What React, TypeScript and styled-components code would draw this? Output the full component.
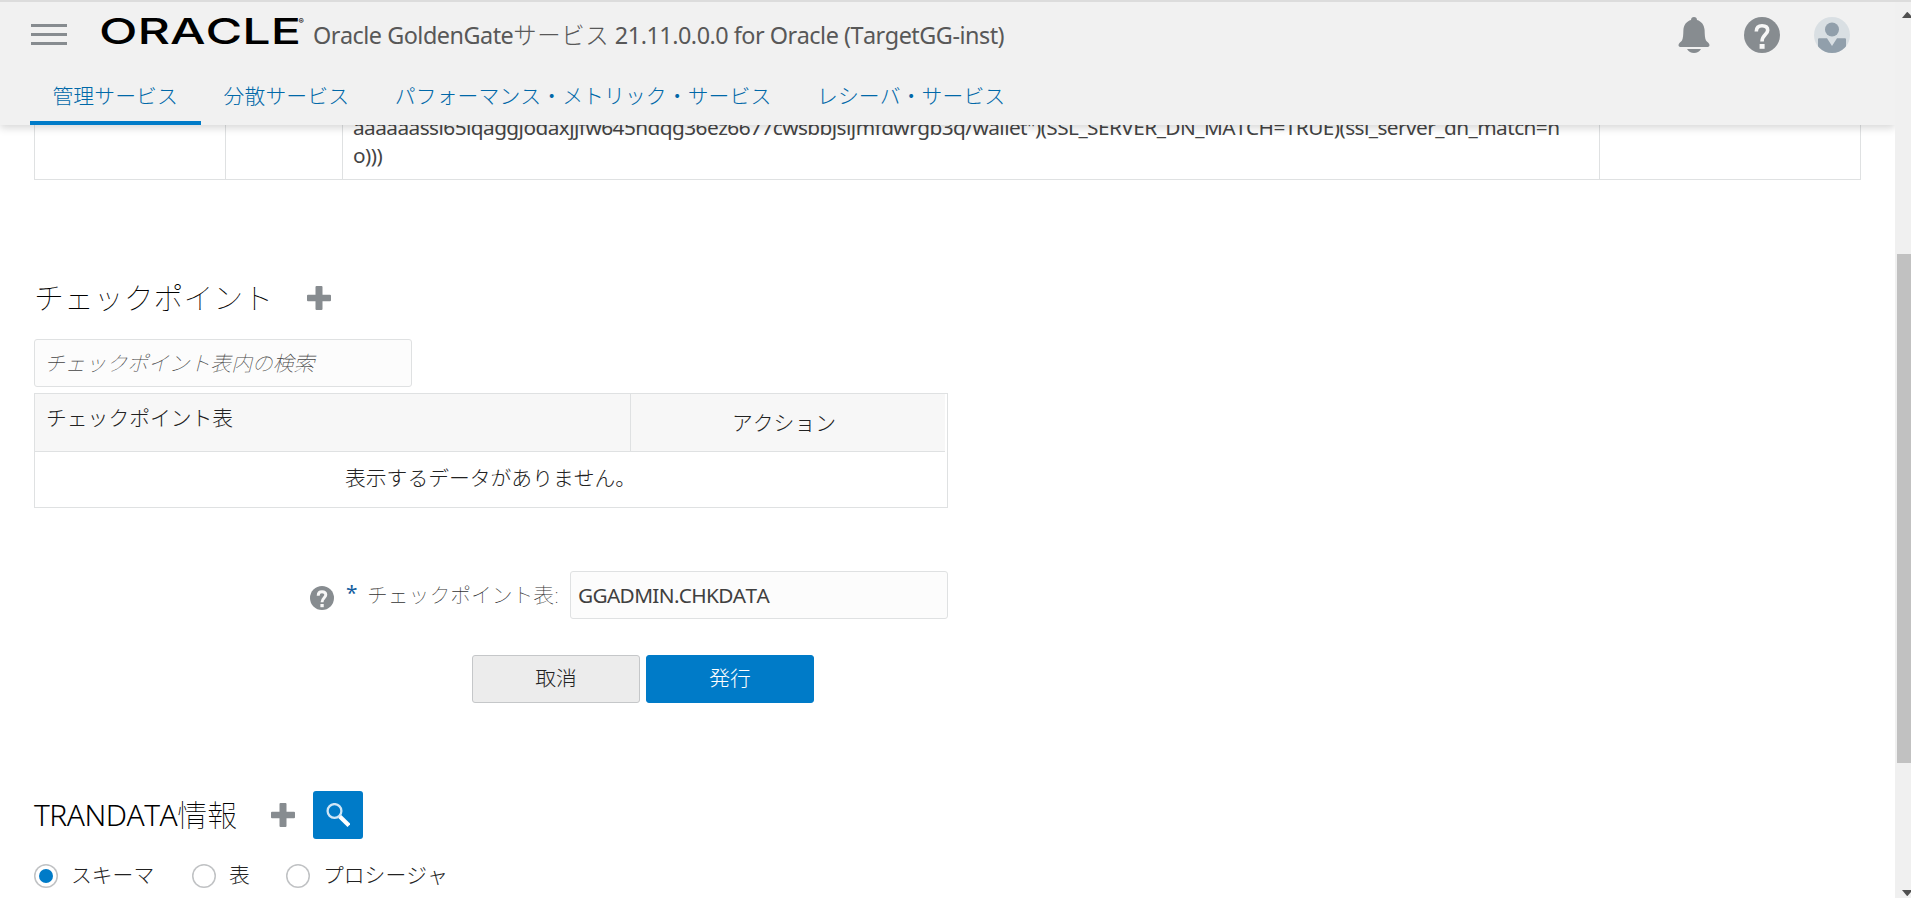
import React from 'react';
import styled, { createGlobalStyle } from 'styled-components';

const fontStack = `"Noto Sans", "Noto Sans CJK JP", sans-serif`;
const accent = '#007bc8';
const line = '#dfe1e2';
const iconGray = '#878c90';

const GlobalStyle = createGlobalStyle`
  *, *::before, *::after { box-sizing: border-box; }
  body {
    margin: 0;
    background: #fff;
    color: #222;
    font-family: ${fontStack};
    font-size: 20.8px;
    font-weight: 300;
    font-kerning: none;
    overflow: hidden;
  }
  input, button { font: inherit; color: inherit; }
`;

const Screen = styled.div`
  display: flex;
  height: 898px;
  border-top: 2px solid #dcdcdc;
`;

const Page = styled.div`
  flex: 1;
  min-width: 0;
  display: flex;
  flex-direction: column;
  overflow: hidden;
`;

const Header = styled.header`
  flex: none;
  position: relative;
  z-index: 1;
  height: 123px;
  display: flex;
  flex-direction: column;
  justify-content: space-between;
  background: #f1f1f1;
  box-shadow: 0 3px 8px rgba(0, 0, 0, 0.16);
`;

const Branding = styled.div`
  display: flex;
  align-items: flex-start;
  padding: 15px 45px 0 31px;
`;

const MenuButton = styled.button`
  width: 36px;
  height: 21px;
  margin: 7px 29px 0 0;
  padding: 0;
  border: 0;
  background: none;
  display: flex;
  flex-direction: column;
  justify-content: space-between;
`;

const MenuBar = styled.span`
  height: 3px;
  background: ${iconGray};
`;

const Logo = styled.svg`
  flex: none;
  width: 216px;
  height: 48px;
  margin: -9px 0 -7px;
`;

const Title = styled.h1`
  flex: 1;
  margin: 2px 0 0 1px;
  font-size: 23.4px;
  line-height: 32px;
  font-weight: 400;
  letter-spacing: -0.49px;
  color: #585858;
  white-space: nowrap;
`;

const TitleKana = styled.span`
  font-weight: 300;
  letter-spacing: 0.6px;
`;

const Tools = styled.div`
  display: flex;
  align-items: center;
  height: 36px;

  svg + svg { margin-left: 34px; }
`;

const Tabs = styled.nav`
  display: flex;
  padding-left: 30px;
`;

const Tab = styled.a<{ $active?: boolean }>`
  height: 56px;
  padding: 8px 23.3px 0 22.4px;
  line-height: 38px;
  letter-spacing: 0.12px;
  color: #0068a8;
  white-space: nowrap;
  border-bottom: 4px solid ${p => (p.$active ? accent : 'transparent')};
`;

const Content = styled.main`
  padding: 0 34px;
`;

const CredentialsRow = styled.div`
  display: grid;
  grid-template-columns: 191px 117px 1257px 1fr;
  width: 1827px;
  height: 55px;
  border: solid ${line};
  border-width: 0 1px 1px 0;
`;

const CredentialsCell = styled.div`
  border-left: 1px solid ${line};
  padding-left: 10px;
  line-height: 28px;
  white-space: nowrap;
  font-weight: 400;
  letter-spacing: -0.555px;
  color: #444;
`;

const ConnectString = styled.div`
  margin-top: -12px;
`;

const SectionHead = styled.div<{ $top: number; $bottom: number; $gap: number }>`
  display: flex;
  align-items: center;
  height: 48px;
  margin: ${p => p.$top}px 0 ${p => p.$bottom}px;
  gap: ${p => p.$gap}px;
`;

const Heading = styled.h2`
  margin: 0;
  font-size: 29.9px;
  line-height: 44px;
  font-weight: 100;
  color: #000;
  white-space: nowrap;
`;

const HeadingLatin = styled.span`
  font-weight: 300;
  letter-spacing: -0.5px;
`;

const SearchButton = styled.button`
  width: 50px;
  height: 48px;
  margin-left: -16px;
  padding: 0;
  border: 0;
  border-radius: 3px;
  background: ${accent};
  display: grid;
  place-items: center;
`;

const Field = styled.input<{ $inset: number }>`
  display: block;
  width: 378px;
  height: 48px;
  padding: 0 ${p => p.$inset}px;
  border: 1px solid ${line};
  border-radius: 3px;
  background: #fcfcfc;
  color: #404040;
  font-weight: 400;
  letter-spacing: -0.65px;
  outline: none;

  &::placeholder {
    color: #444;
    opacity: 1;
    font-style: italic;
    font-weight: 100;
    letter-spacing: 0;
  }
`;

const Table = styled.div`
  width: 914px;
  height: 115px;
  margin-top: 6px;
  border: 1px solid ${line};
`;

const TableHead = styled.div`
  display: grid;
  grid-template-columns: 596px 1fr;
  width: 910px;
  height: 58px;
  background: #f7f7f7;
  border-bottom: 1px solid ${line};
`;

const HeadCell = styled.div<{ $center?: boolean }>`
  padding: ${p => (p.$center ? '0 8px 2px 0' : '0 0 12px 11px')};
  display: flex;
  align-items: center;
  justify-content: ${p => (p.$center ? 'center' : 'flex-start')};
  border-right: ${p => (p.$center ? '0' : `1px solid ${line}`)};
`;

const EmptyRow = styled.div`
  height: 54px;
  line-height: 52px;
  padding-left: 310px;
`;

const FormRow = styled.div`
  width: 914px;
  margin-top: 63px;
  display: flex;
  align-items: center;
  justify-content: flex-end;

  > svg { margin-top: 6px; }
`;

const Required = styled.span`
  margin: -6px 10px 0 12px;
  width: 11px;
  color: #145c9e;
  font-weight: 400;
`;

const Label = styled.label`
  width: 203px;
  color: #333;
  font-weight: 100;
  line-height: 48px;
  white-space: nowrap;
`;

const Actions = styled.div`
  display: flex;
  gap: 6px;
  margin: 36px 0 0 438px;
`;

const Button = styled.button<{ $primary?: boolean }>`
  width: 168px;
  height: 48px;
  padding: 0 0 4px;
  border: 1px solid ${p => (p.$primary ? accent : '#c5c7c9')};
  border-radius: 3px;
  background: ${p => (p.$primary ? accent : '#ececec')};
  color: ${p => (p.$primary ? '#fff' : '#222')};
`;

const Radios = styled.div`
  display: flex;
`;

const Radio = styled.label<{ $width?: number }>`
  display: flex;
  align-items: center;
  gap: 13px;
  width: ${p => (p.$width ? `${p.$width}px` : 'auto')};
  height: 30px;
  white-space: nowrap;
`;

const RadioDot = styled.span<{ $checked?: boolean }>`
  flex: none;
  width: 24px;
  height: 24px;
  margin-top: 4px;
  border-radius: 50%;
  display: grid;
  place-items: center;
  background: #fff;
  box-shadow: inset 0 0 0 1.5px #c0c2c4;

  &::after {
    content: '';
    width: 14px;
    height: 14px;
    border-radius: 50%;
    background: ${p => (p.$checked ? accent : 'transparent')};
  }
`;

const Scrollbar = styled.div`
  flex: none;
  width: 16px;
  background: #f0f0f0;
  display: flex;
  flex-direction: column;
  align-items: flex-end;
  padding: 10px 0 2px;
`;

const Thumb = styled.div`
  width: 14px;
  height: 509px;
  margin: 236px 0 auto;
  background: #c1c1c1;
`;

const ScrollArrow = ({ down }: { down?: boolean }) => (
  <svg width="9" height="6" viewBox="0 0 9 6" fill="#505050">
    <path d={down ? 'M0 0H9V2L5.5 6H5Z' : 'M0 6H9V3.5L5.5 0H5Z'} />
  </svg>
);

const BellIcon = () => (
  <svg width="32" height="36" viewBox="0 0 32 36" fill={iconGray}>
    <path d="M16 0C14.2 0 13 1.2 13 3C8.500 4.300 5.700 8 5.400 13C5.200 18 5.200 21 4 23.500C3.200 25 .5 26 .5 28C.5 29.500 1.500 30 3 30H29C30.500 30 31.500 29.500 31.500 28C31.500 26 28.800 25 28 23.500C26.800 21 26.800 18 26.600 13C26.300 8 23.500 4.300 19 3C19 1.200 17.800 0 16 0Z" />
    <path d="M9 32H23C21.500 34.800 19 36 16 36S10.500 34.800 9 32Z" />
  </svg>
);

const HelpIcon = ({ size }: { size: number }) => (
  <svg width={size} height={size} viewBox="0 0 36 36">
    <circle cx="18" cy="18" r="18" fill={iconGray} />
    <path
      d="M12.300 14.500C12.300 10.500 14.500 8.700 18 8.700C21.700 8.700 23.700 10.500 23.700 13.300C23.700 17.500 18 18 18 24.500"
      fill="none"
      stroke="#f7f7f7"
      strokeWidth={size > 30 ? 3.6 : 4.4}
    />
    <rect x="15.600" y="27" width="5" height="4.800" fill="#f7f7f7" />
  </svg>
);

const AvatarIcon = () => (
  <svg width="36" height="36" viewBox="0 0 36 36">
    <clipPath id="avatar"><circle cx="18" cy="18" r="18" /></clipPath>
    <g clipPath="url(#avatar)">
      <rect width="36" height="36" fill="#d9dfe3" />
      <circle cx="18" cy="12.500" r="7" fill="#919fab" />
      <path d="M5 21.200H13L18 29L23 21.200H31Q32 21.200 32 22.500V36H4V22.500Q4 21.200 5 21.200Z" fill="#919fab" />
    </g>
  </svg>
);

const PlusIcon = () => (
  <svg width="24" height="24" viewBox="0 0 24 24" fill={iconGray}>
    <path d="M9.500 0h5q1 0 1 1v7.700h7.500q1 0 1 1v4.600q0 1-1 1h-7.500V23q0 1-1 1h-5q-1 0-1-1v-7.700H1q-1 0-1-1V9.700q0-1 1-1h7.500V1q0-1 1-1Z" />
  </svg>
);

const SearchIcon = () => (
  <svg width="24" height="24" viewBox="0 0 24 24" fill="none">
    <circle cx="8.500" cy="8" r="6.900" stroke="#cfe6f6" strokeWidth="2.300" />
    <path d="M13.800 13.500L23 22.500" stroke="#fff" strokeWidth="4.200" />
  </svg>
);

export default function App() {
  return (
    <>
      <GlobalStyle />
      <Screen>
        <Page>
          <Header>
            <Branding>
              <MenuButton aria-label="menu"><MenuBar /><MenuBar /><MenuBar /></MenuButton>
              <Logo viewBox="0 0 216 48" fontFamily="Inter" fill="#000">
                <text x="3" y="36" fontSize="35.800" fontWeight="500" textLength="202" lengthAdjust="spacingAndGlyphs">ORACLE</text>
                <text x="202.500" y="16" fontSize="8" fontWeight="500">®</text>
              </Logo>
              <Title>
                Oracle GoldenGate<TitleKana>サービス</TitleKana> 21.11.0.0.0 for Oracle (TargetGG-inst)
              </Title>
              <Tools><BellIcon /><HelpIcon size={36} /><AvatarIcon /></Tools>
            </Branding>
            <Tabs>
              <Tab $active>管理サービス</Tab>
              <Tab>分散サービス</Tab>
              <Tab>パフォーマンス・メトリック・サービス</Tab>
              <Tab>レシーバ・サービス</Tab>
            </Tabs>
          </Header>
          <Content>
            <CredentialsRow>
              <CredentialsCell />
              <CredentialsCell />
              <CredentialsCell>
                <ConnectString>
                  aaaaaassi65iqaggjodaxjjfw645hdqg36ez6677cwsbbjsijmfdwrgb3q/wallet")(SSL_SERVER_DN_MATCH=TRUE)(ssl_server_dn_match=n<br />o)))
                </ConnectString>
              </CredentialsCell>
              <CredentialsCell />
            </CredentialsRow>

            <SectionHead $top={94} $bottom={17} $gap={34}>
              <Heading>チェックポイント</Heading>
              <PlusIcon />
            </SectionHead>
            <Field $inset={9} placeholder="チェックポイント表内の検索" />
            <Table>
              <TableHead>
                <HeadCell>チェックポイント表</HeadCell>
                <HeadCell $center>アクション</HeadCell>
              </TableHead>
              <EmptyRow>表示するデータがありません。</EmptyRow>
            </Table>

            <FormRow>
              <HelpIcon size={24} />
              <Required>*</Required>
              <Label>チェックポイント表:</Label>
              <Field $inset={7} defaultValue="GGADMIN.CHKDATA" />
            </FormRow>
            <Actions>
              <Button>取消</Button>
              <Button $primary>発行</Button>
            </Actions>

            <SectionHead $top={88} $bottom={20} $gap={34}>
              <Heading><HeadingLatin>TRANDATA</HeadingLatin>情報</Heading>
              <PlusIcon />
              <SearchButton aria-label="search"><SearchIcon /></SearchButton>
            </SectionHead>
            <Radios>
              <Radio $width={158}><RadioDot $checked />スキーマ</Radio>
              <Radio $width={94}><RadioDot />表</Radio>
              <Radio><RadioDot />プロシージャ</Radio>
            </Radios>
          </Content>
        </Page>
        <Scrollbar>
          <ScrollArrow />
          <Thumb />
          <ScrollArrow down />
        </Scrollbar>
      </Screen>
    </>
  );
}
